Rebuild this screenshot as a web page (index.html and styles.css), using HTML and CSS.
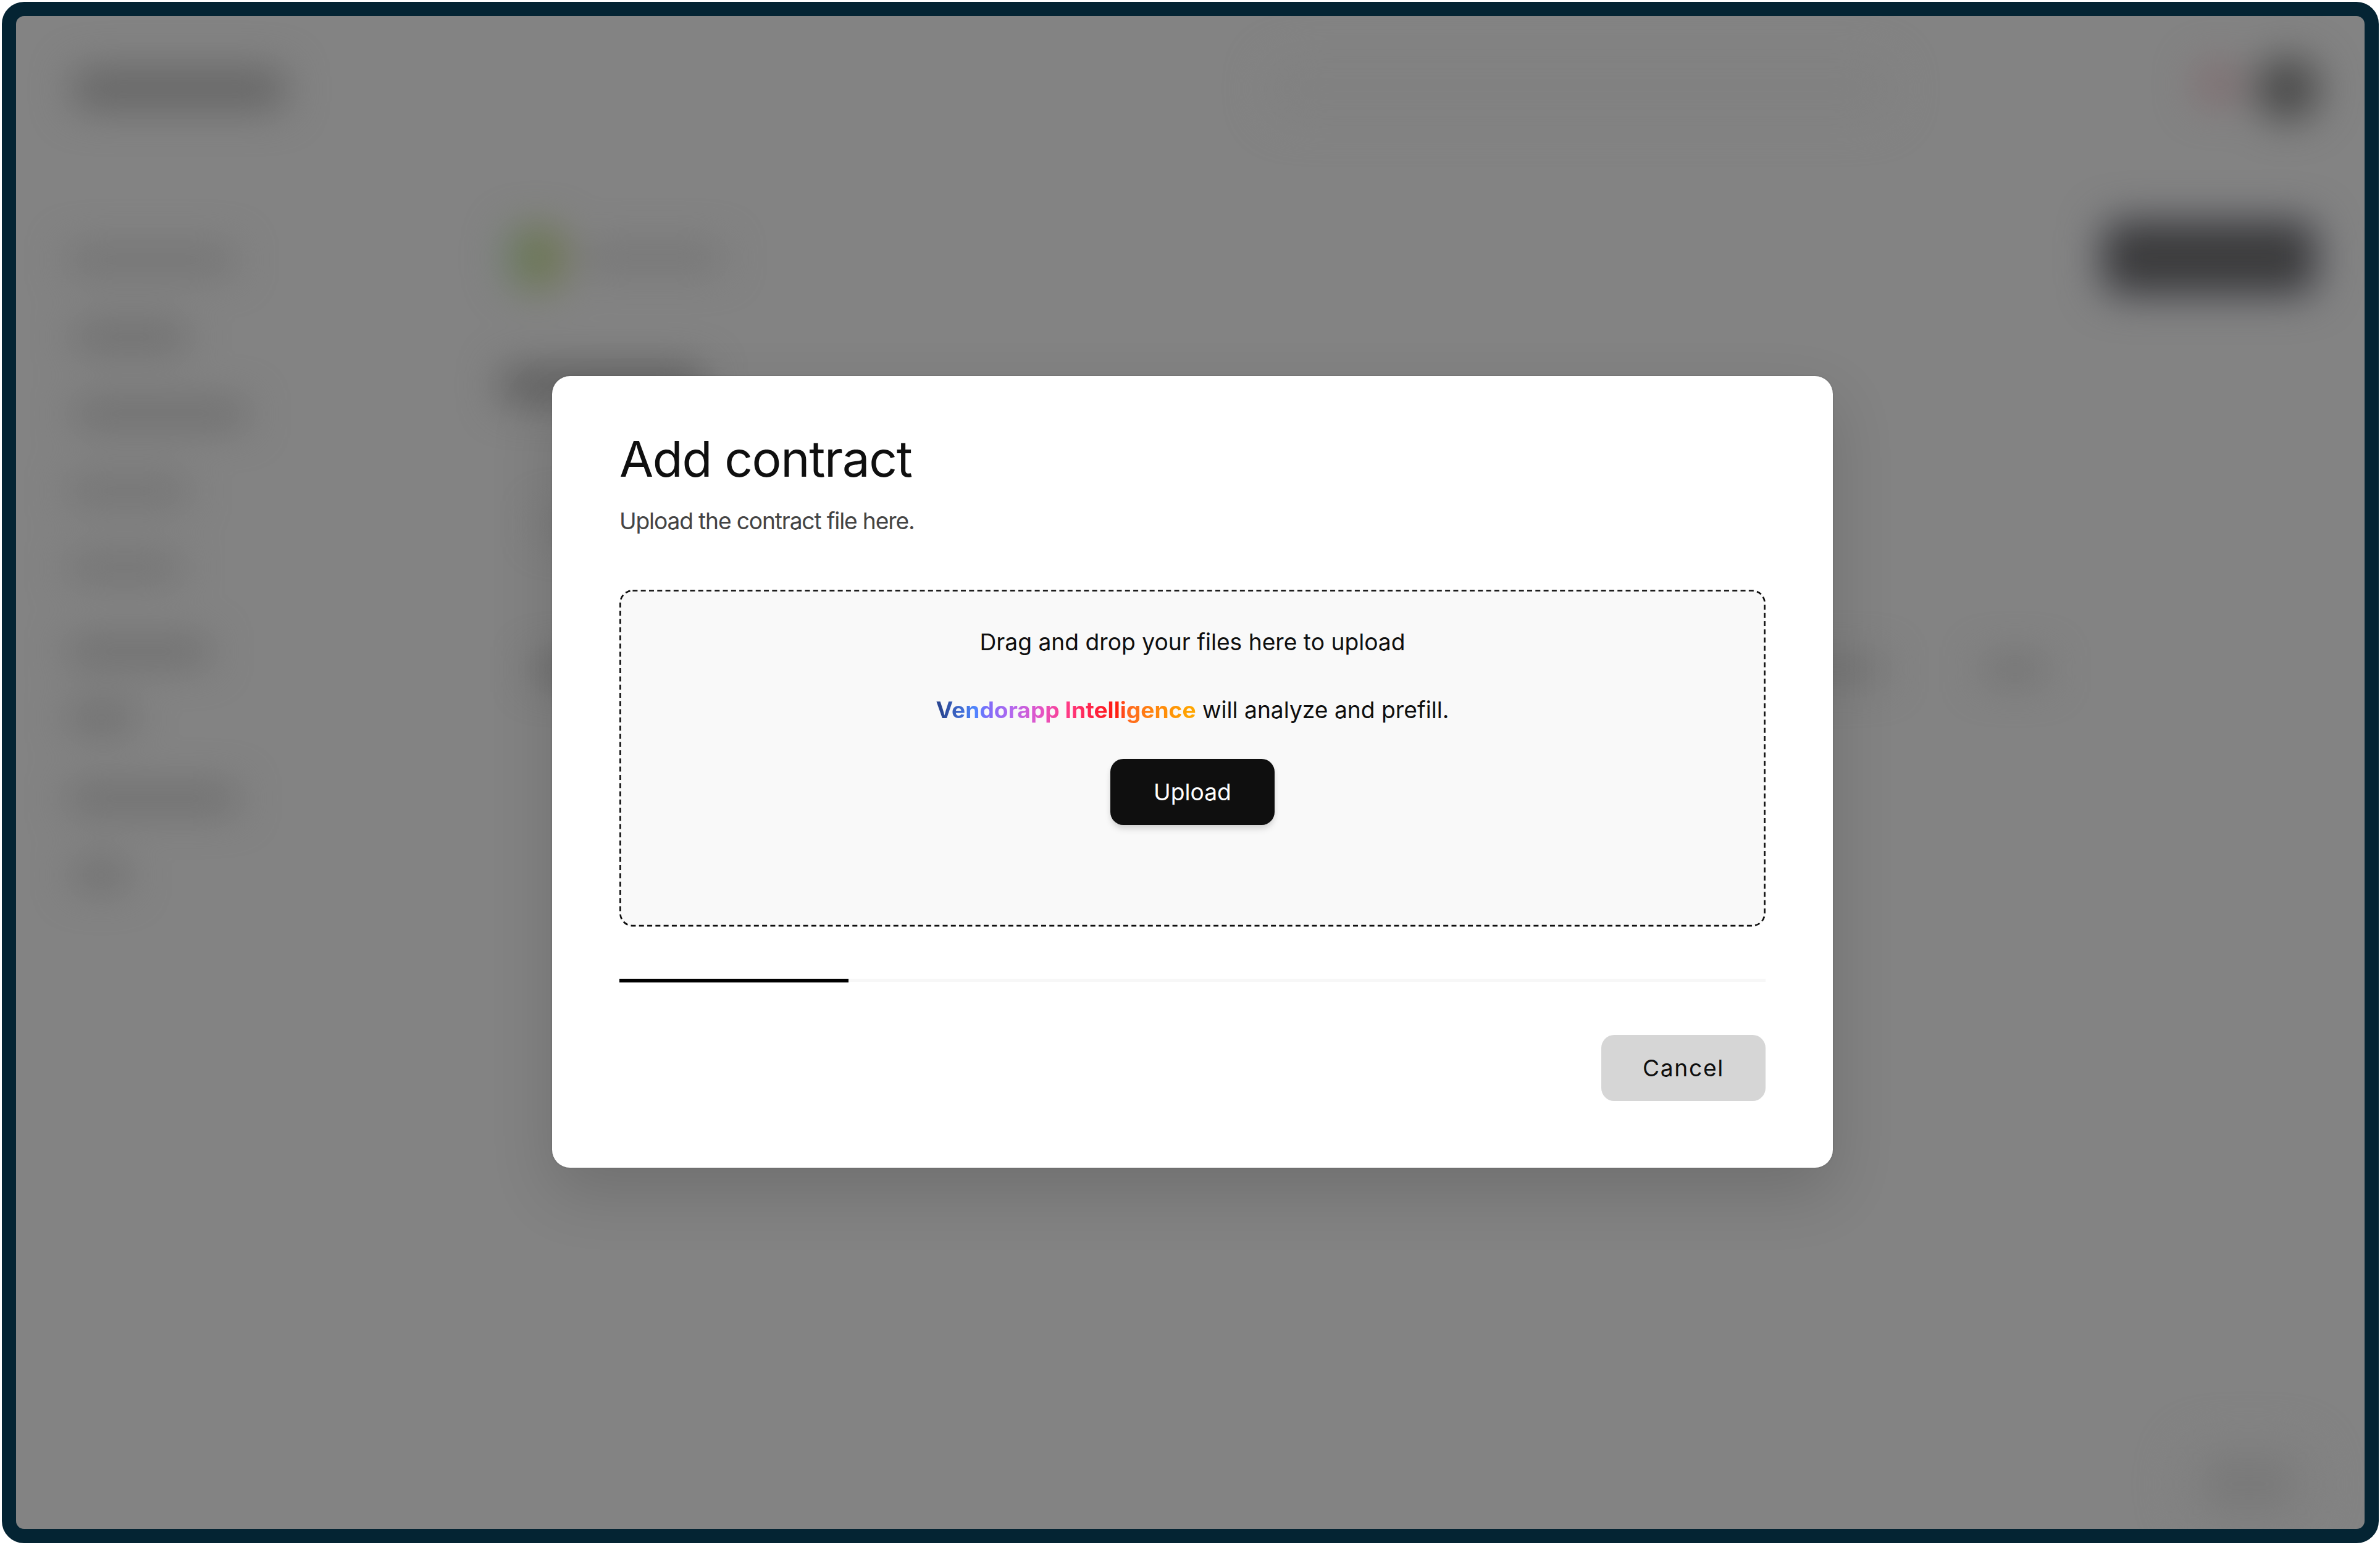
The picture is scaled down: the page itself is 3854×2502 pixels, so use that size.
FILE: index.html
```html
<!DOCTYPE html>
<html lang="en">
<head>
<meta charset="utf-8">
<title>Add contract</title>
<link rel="stylesheet" href="styles.css">
</head>
<body>
<div class="window">
  <div class="page" aria-hidden="true">
    <header class="topbar">
      <span class="logo"></span>
      <span class="search"></span>
      <span class="notice"></span>
      <span class="avatar"></span>
    </header>
    <div class="columns">
      <ul class="menu">
        <li><i class="w270 soft"></i></li>
        <li><i class="w184 inset"></i></li>
        <li><i class="w280 inset"></i></li>
        <li><i class="w195 soft"></i></li>
        <li><i class="w184 soft"></i></li>
        <li class="low"><i class="w230"></i></li>
        <li class="high"><i class="w109"></i></li>
        <li><i class="w275"></i></li>
        <li><i class="w87 inset"></i></li>
      </ul>
      <main class="content">
        <div class="vendor">
          <span class="vendor-logo"></span>
          <span class="vendor-name"></span>
          <span class="action"></span>
        </div>
        <div class="heading"></div>
        <div class="table-row first"><i></i></div>
        <div class="table-row second"><i></i><i></i><i></i></div>
      </main>
    </div>
    <div class="help"><i></i></div>
  </div>

  <div class="overlay">
    <section class="modal" role="dialog" aria-labelledby="title">
      <h1 class="title" id="title">Add contract</h1>
      <p class="subtitle">Upload the contract file here.</p>
      <div class="dropzone">
        <svg class="dashes" width="1856" height="546" viewBox="0 0 1856 546"><rect x="1.4" y="1.5" width="1853.2" height="542.6" rx="20" ry="20"/></svg>
        <p class="hint">Drag and drop your files here to upload</p>
        <p class="hint second"><b class="brand">Vendorapp Intelligence</b> will analyze and prefill.</p>
        <button class="button primary">Upload</button>
      </div>
      <div class="progress"><div class="progress-value" style="width:20%"></div></div>
      <div class="actions"><button class="button secondary">Cancel</button></div>
    </section>
  </div>
</div>
</body>
</html>
```
FILE: styles.css
```css
* { box-sizing: border-box; }
body {
  margin: 0;
  height: 2502px;
  padding: 3px 2px 3px 3px;
  background: #fff;
  overflow: hidden;
  font-family: Inter, "Liberation Sans", sans-serif;
  color: #0f0f0f;
}
p, h1, ul { margin: 0; padding: 0; }
.window {
  position: relative;
  height: 2496px;
  border: 23px solid #042433;
  border-radius: 36px;
  background: #838383;
  overflow: hidden;
}

/* blurred page under the dialog */
.page {
  position: relative;
  height: 2450px;
  filter: blur(32px);
}
.topbar {
  display: flex;
  align-items: center;
  height: 236px;
  padding-left: 92px;
}
.logo { width: 345px; height: 68px; border-radius: 20px; background: #666; }
.search { width: 1020px; height: 100px; margin-left: 1587px; border-radius: 50px; background: #818181; }
.notice { width: 74px; height: 74px; margin: -16px 0 0 484px; border-radius: 50%; background: #7f6d70; }
.avatar { width: 106px; height: 106px; margin-left: 23px; border-radius: 50%; background: #4a4a4a; }
.columns { display: flex; padding-top: 97px; }
.menu { width: 784px; padding-left: 84px; list-style: none; }
.menu li { display: flex; align-items: center; height: 124.5px; }
.menu .low { padding-top: 22px; }
.menu .high { padding-bottom: 10px; }
.menu i { height: 44px; border-radius: 10px; background: #6d6d6d; }
.menu .soft { background: #727272; }
.menu .inset { margin-left: 10px; }
.w270 { width: 270px; }
.w184 { width: 184px; }
.w280 { width: 280px; }
.w195 { width: 195px; }
.w230 { width: 230px; }
.w109 { width: 109px; }
.w275 { width: 275px; }
.w87 { width: 87px; }
.content { flex: 1; }
.vendor { display: flex; align-items: center; height: 116px; }
.vendor-logo { width: 100px; height: 100px; margin-left: 8px; border-radius: 34px; background: linear-gradient(90deg, #687d77, #6b774f 40%, #71755a); }
.vendor-name { width: 225px; height: 40px; margin-left: 28px; border-radius: 10px; background: #747474; }
.action { width: 340px; height: 114px; margin-left: 2237px; border-radius: 26px; background: #3b3b3c; box-shadow: 0 0 0 8px #5f6170; }
.heading { width: 330px; height: 62px; margin-top: 118px; border-radius: 16px; background: #606060; }
.table-row { display: flex; align-items: center; height: 60px; }
.table-row i { height: 38px; background: #707070; }
.first { margin: 164px 0 0 70px; }
.first i { width: 200px; background: #757575; }
.second { margin: 175px 0 0 55px; }
.second i:nth-child(1) { width: 400px; background: #646464; }
.second i:nth-child(2) { width: 220px; margin-left: 1568px; }
.second i:nth-child(3) { width: 104px; margin-left: 158px; }
.help { position: absolute; right: 72px; bottom: 0; display: flex; align-items: center; justify-content: center; width: 230px; height: 146px; border-radius: 60px; background: #808080; }
.help i { width: 120px; height: 58px; border-radius: 20px; background: #767676; }

/* dialog */
.overlay { position: absolute; inset: 0; padding: 583px 0 0 868px; }
.modal {
  width: 2074px;
  height: 1282px;
  padding: 86px 109px 0;
  border-radius: 29px;
  background: #fff;
  box-shadow: 0 40px 100px rgba(0, 0, 0, .15), 0 0 3px rgba(0, 0, 0, .2);
}
.title { font-size: 80px; line-height: 96px; font-weight: 400; letter-spacing: -1.35px; }
.subtitle { margin-top: 25px; font-size: 37.2px; line-height: 56px; letter-spacing: -1.16px; color: #444; }
.dropzone {
  position: relative;
  display: flex;
  flex-direction: column;
  align-items: center;
  height: 546px;
  margin-top: 83px;
  padding-top: 57px;
  border-radius: 21px;
  background: #f9f9f9;
}
.dashes { position: absolute; left: 0; top: 0; }
.dashes rect { fill: none; stroke: #0f0f0f; stroke-width: 2.7; stroke-dasharray: 8 5.29; }
.hint { font-size: 37.2px; line-height: 56px; }
.hint.second { margin: 54px 0 51px; }
.brand {
  font-weight: 700;
  color: transparent;
  background: linear-gradient(90deg, #2a4794 2%, #4f86ff 15%, #7f6cf9 20%, #b468ee 29%, #e354c6 40%, #ff3d8a 50%, #ff2d66 55%, #ff2035 63%, #ff1a10 69%, #ff6a20 74%, #ff8010 82%, #ffa600 98%);
  -webkit-background-clip: text;
  background-clip: text;
}
.button {
  width: 266px;
  height: 107px;
  padding: 0;
  border: 0;
  border-radius: 21px;
  font: 400 37.2px/56px Inter, "Liberation Sans", sans-serif;
}
.primary { background: #0f0f0f; color: #fff; box-shadow: 0 8px 12px -2px rgba(0, 0, 0, .13), 0 3px 8px rgba(0, 0, 0, .06); }
.secondary { background: #d6d6d6; color: #0f0f0f; letter-spacing: 1.7px; }
.progress { height: 5px; margin-top: 84px; background: #f7f7f7; }
.progress-value { height: 6px; background: #000; }
.actions { display: flex; justify-content: flex-end; margin-top: 86px; }
```
